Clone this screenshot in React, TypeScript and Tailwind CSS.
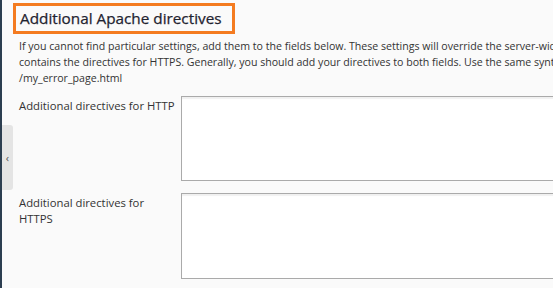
import React from 'react';

const App: React.FC = () => {
  return (
    <div
      className="relative flex h-[288px] w-full overflow-hidden bg-[#fafafa] text-[#333]"
      style={{ fontFamily: '"Open Sans", "Noto Sans", sans-serif' }}
    >
      {/* left dark edge */}
      <div className="w-[2px] shrink-0 bg-[#2c3e50]" />

      {/* collapse handle */}
      <div className="absolute left-[2px] top-[125px] flex h-[65px] w-[11px] items-center justify-center rounded-r-[3px] bg-[#e4e4e4] text-[11px] leading-none text-[#555]">
        ‹
      </div>

      <div className="min-w-0 flex-1 pl-[11px] pt-[3px]">
        {/* Title */}
        <div className="inline-block border-[3px] border-[#f47b20] pl-[4px] pr-[10px]">
          <h2 className="h-[25px] text-[15.3px] font-normal leading-[25px] text-[#1f2330] [-webkit-text-stroke:0.25px_#1f2330]">
            Additional Apache directives
          </h2>
        </div>

        {/* Description */}
        <div className="mt-[4px] pl-[6px] text-[10.6px] leading-[16px] whitespace-nowrap">
          <p>
            If you cannot find particular settings, add them to the fields below. These settings will override the server-wide settings. The first field contains the directives for HTTP, the second one
          </p>
          <p>
            contains the directives for HTTPS. Generally, you should add your directives to both fields. Use the same syntax as in the Apache configuration file. For example: ErrorDocument 404
          </p>
          <p>/my_error_page.html</p>
        </div>

        {/* Fields */}
        <div className="mt-[10px] flex flex-col gap-[12px] pl-[6px]">
          <div className="flex">
            <label className="w-[162px] shrink-0 whitespace-nowrap pt-[2px] text-[11.3px] leading-[16px]">
              Additional directives for HTTP
            </label>
            <textarea className="h-[85px] w-[400px] shrink-0 resize-none border border-[#aaa] bg-white shadow-[inset_0_2px_1px_rgba(0,0,0,0.06)] outline-none" />
          </div>
          <div className="flex">
            <label className="w-[162px] shrink-0 whitespace-nowrap pt-[2px] text-[11.3px] leading-[16px]">
              Additional directives for
              <br />
              HTTPS
            </label>
            <textarea className="h-[86px] w-[400px] shrink-0 resize-none border border-[#aaa] bg-white shadow-[inset_0_2px_1px_rgba(0,0,0,0.06)] outline-none" />
          </div>
        </div>
      </div>
    </div>
  );
};

export default App;
